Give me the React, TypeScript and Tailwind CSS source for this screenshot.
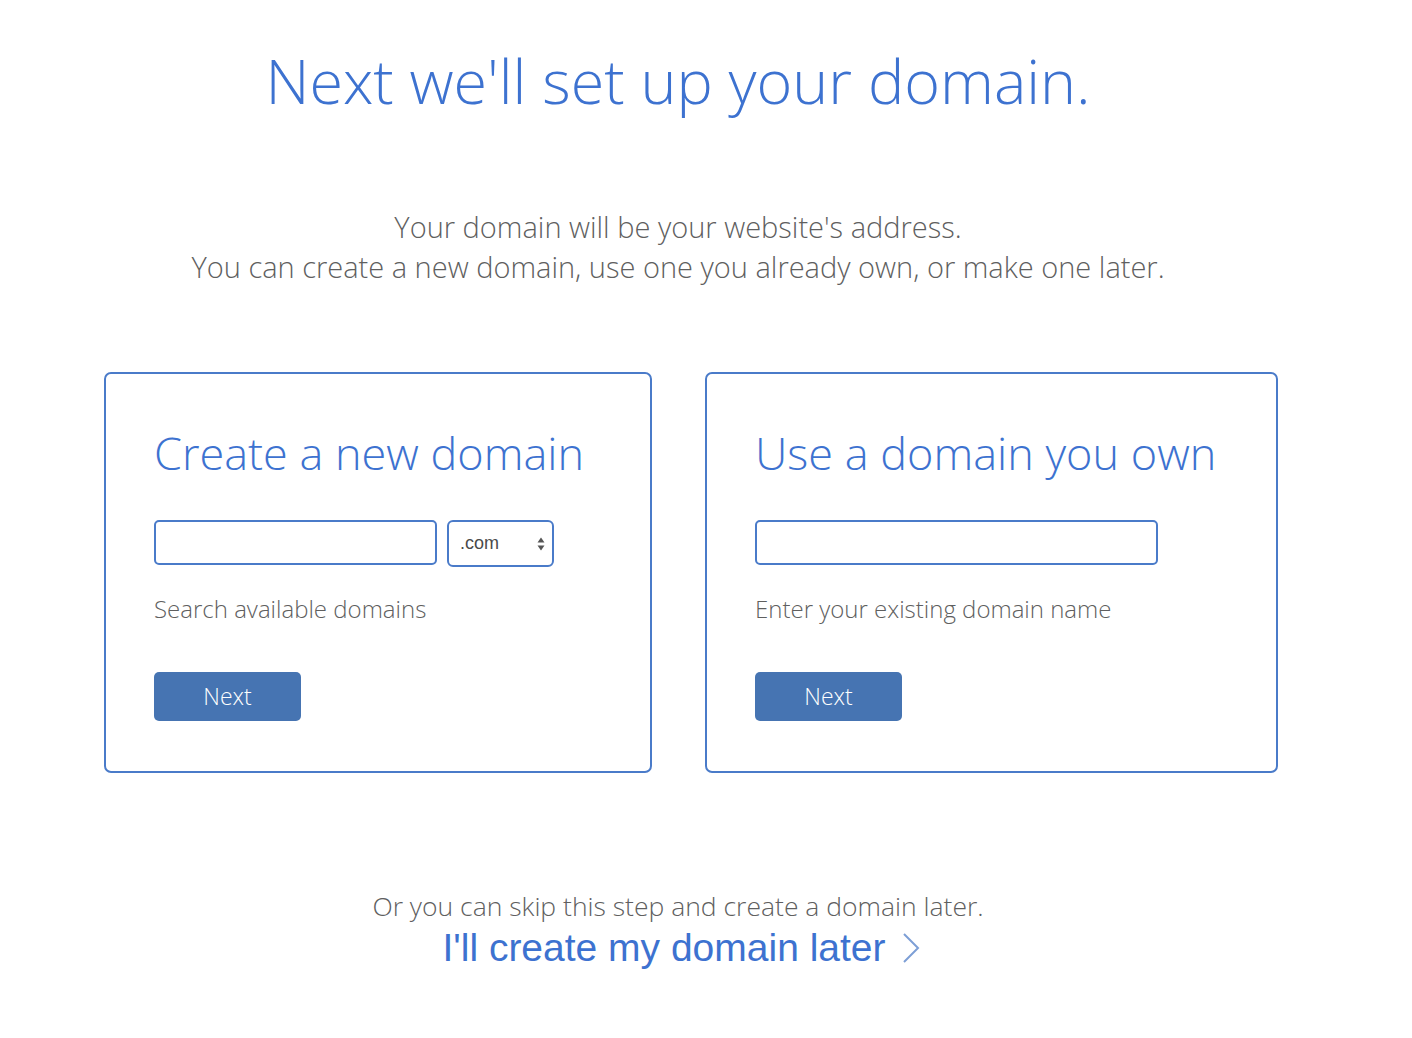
import React, { useState } from 'react';

const openSans = "font-['Open_Sans',sans-serif]";

function DomainCard({
    title,
    hint,
    width,
    children,
}: {
    title: string;
    hint: string;
    width: string;
    children: React.ReactNode;
}) {
    return (
        <div className={`${width} h-[401px] shrink-0 rounded-[7px] border-2 border-[#4a7bc9] bg-white pl-[48px] pt-[51px]`}>
            <h2 className="text-[45px] font-light leading-[56px] text-[#3d72d0]">{title}</h2>
            <div className="mt-[39px] flex h-[45px] items-start gap-[10px]">{children}</div>
            <p className="mt-[30px] text-[24px] font-light leading-[28px] text-[#5f5f5f]">{hint}</p>
            <button
                type="button"
                className="mt-[49px] flex h-[49px] w-[147px] items-center justify-center rounded-[5px] bg-[#4674b2] text-[23px] font-light text-white"
            >
                Next
            </button>
        </div>
    );
}

export default function App() {
    const [newDomain, setNewDomain] = useState('');
    const [tld, setTld] = useState('.com');
    const [ownDomain, setOwnDomain] = useState('');

    return (
        <div className={`min-h-screen w-full bg-white ${openSans}`}>
            <div className="flex w-[1356px] flex-col items-center">
                {/* Heading */}
                <h1 className="pt-[41px] text-[61px] font-light leading-[80px] text-[#3d72d0]">
                    Next we'll set up your domain.
                </h1>

                {/* Intro */}
                <p className="mt-[86px] text-center text-[29px] font-light leading-[40px] text-[#5f5f5f]">
                    Your domain will be your website's address.
                    <br />
                    You can create a new domain, use one you already own, or make one later.
                </p>
            </div>

            {/* Cards */}
            <div className="mt-[85px] flex gap-[53px] pl-[104px]">
                <DomainCard title="Create a new domain" hint="Search available domains" width="w-[548px]">
                    <input
                        type="text"
                        value={newDomain}
                        onChange={e => setNewDomain(e.target.value)}
                        className="h-[45px] w-[283px] rounded-[5px] border-2 border-[#4a7bc9] px-3 text-[18px] outline-none"
                    />
                    <div className="relative h-[47px] w-[107px] shrink-0">
                        <select
                            value={tld}
                            onChange={e => setTld(e.target.value)}
                            className="h-full w-full appearance-none rounded-[6px] border-2 border-[#4a7bc9] bg-white pl-[11px] font-['Liberation_Sans',sans-serif] text-[18px] text-[#4a4a4a] outline-none"
                        >
                            <option>.com</option>
                            <option>.net</option>
                            <option>.org</option>
                        </select>
                        <svg
                            className="pointer-events-none absolute right-[9px] top-1/2 h-[16px] w-[8px] -translate-y-1/2"
                            viewBox="0 0 8 16"
                            fill="#555"
                        >
                            <path d="M4 1.5 7.5 6.5h-7z" />
                            <path d="M4 14.5.5 9.5h7z" />
                        </svg>
                    </div>
                </DomainCard>

                <DomainCard title="Use a domain you own" hint="Enter your existing domain name" width="w-[573px]">
                    <input
                        type="text"
                        value={ownDomain}
                        onChange={e => setOwnDomain(e.target.value)}
                        className="h-[45px] w-[403px] rounded-[5px] border-2 border-[#4a7bc9] px-3 text-[18px] outline-none"
                    />
                </DomainCard>
            </div>

            {/* Skip */}
            <div className="flex w-[1356px] flex-col items-center pt-[115px]">
                <p className="text-[26.5px] font-light leading-[36px] text-[#5f5f5f]">
                    Or you can skip this step and create a domain later.
                </p>
                <a
                    href="#"
                    className="mt-[2px] flex items-center gap-[16px] pl-[6px] font-['Liberation_Sans',sans-serif] text-[39px] leading-[44px] text-[#3d72d0]"
                >
                    I'll create my domain later
                    <svg className="h-[32px] w-[18px]" viewBox="0 0 18 32" fill="none" stroke="#7d9fd6" strokeWidth="2">
                        <path d="M2 2l14 14L2 30" />
                    </svg>
                </a>
            </div>
        </div>
    );
}
